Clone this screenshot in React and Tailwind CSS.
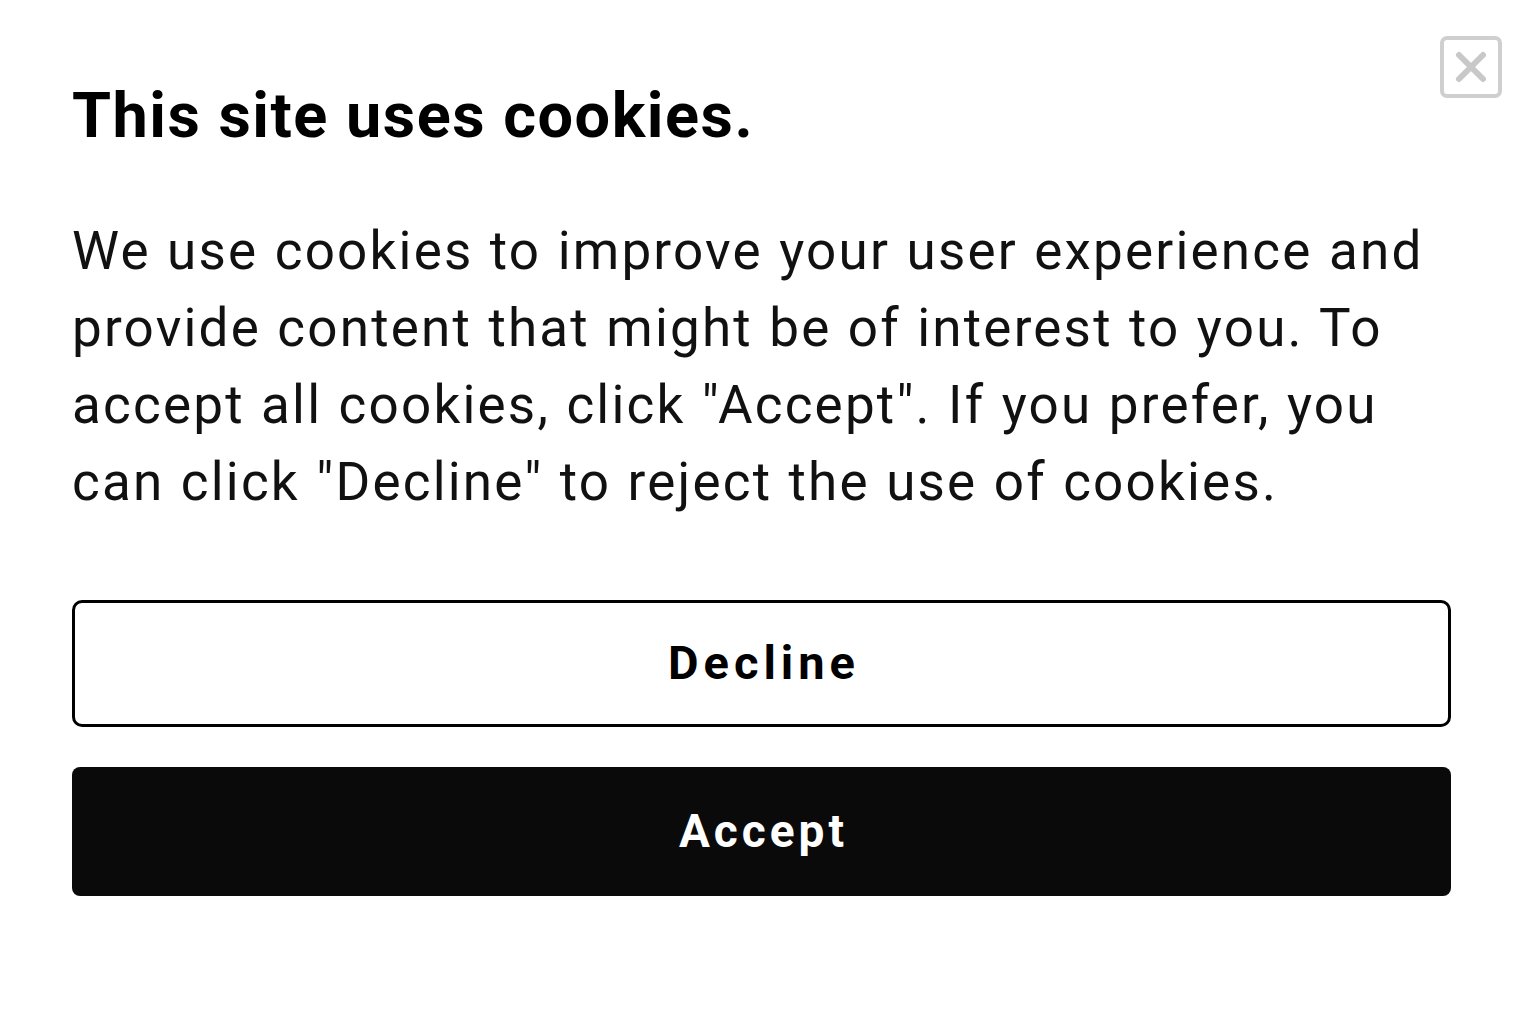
import React from "react";

export default function App() {
  return (
    <div
      className="relative w-[1536px] h-[1024px] bg-white text-black"
      style={{ fontFamily: "Roboto, 'Liberation Sans', sans-serif" }}
    >
      {/* Close */}
      <button
        aria-label="Close"
        className="absolute right-[34px] top-[36px] w-[62px] h-[62px] rounded-[7px] border-[4px] border-[#cfcfcf] flex items-center justify-center"
      >
        <svg width="36" height="36" viewBox="0 0 36 36">
          <path d="M6 6L30 30M30 6L6 30" stroke="#c8c8c8" strokeWidth="6" strokeLinecap="round" />
        </svg>
      </button>

      <div className="pl-[72px] pr-[85px] pt-[80px]">
        <h2 className="text-[63px] leading-[72px] font-bold tracking-[1.5px]">This site uses cookies.</h2>

        <p className="mt-[61px] text-[53px] leading-[77px] tracking-[2.2px] [word-spacing:1px] text-[#111]">
          We use cookies to improve your user experience and provide content that might be of interest to you. To
          accept all cookies, click "Accept". If you prefer, you can click "Decline" to reject the use of cookies.
        </p>

        <div className="mt-[79px] flex flex-col gap-[40px]">
          <button className="h-[127px] w-full rounded-[10px] border-[3px] border-black bg-white text-[47px] font-bold tracking-[5px] pl-[5px]">
            Decline
          </button>
          <button className="h-[129px] w-full rounded-[8px] bg-[#0a0a0a] text-white text-[46px] font-bold tracking-[4px] pl-[4px]">
            Accept
          </button>
        </div>
      </div>
    </div>
  );
}
